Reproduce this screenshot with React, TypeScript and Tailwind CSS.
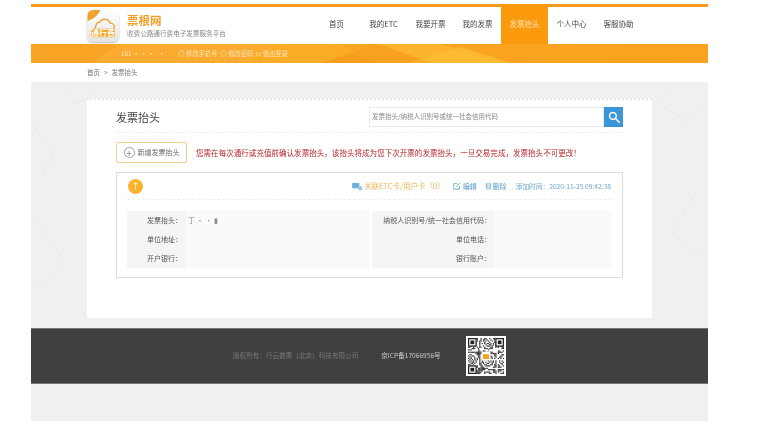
const navItems = ['首页', '我的ETC', '我要开票', '我的发票', '发票抬头', '个人中心', '客服协助']

const qrCells = Array.from({ length: 29 * 29 }, (_, i) => {
  const x = i % 29
  const y = Math.floor(i / 29)
  return { x, y, on: ((x * 7 + y * 13 + x * y * 3 + ((x ^ y) * 5)) % 7) < 3 }
})

function Logo() {
  return (
    <div className="relative w-[32px] h-[32px] rounded-[6px] bg-gradient-to-b from-white to-[#e4e4e4] shadow-[0_1px_2px_#bbb] overflow-hidden shrink-0">
      <svg viewBox="0 0 33 34" className="absolute inset-0 w-full h-full">
        <path d="M0 12 L0 5 Q0 0 5 0 L14 0 Q10 8 0 12Z" fill="#f0a32c" />
        <path d="M9 17 a4 4 0 0 1 4 -4 a6 6 0 0 1 11 1 a4 4 0 0 1 1 8 L11 22 a3 3 0 0 1 -2 -5Z" fill="none" stroke="#eaa33a" strokeWidth="1.4" />
        <rect x="4" y="20" width="25" height="9" rx="2" fill="#f4a41f" />
      </svg>
      <span className="absolute left-0 right-0 top-[18px] text-center text-[8px] leading-[10px] font-bold text-white">通行费</span>
    </div>
  )
}

function BandPattern() {
  return (
    <svg viewBox="0 0 677 19" preserveAspectRatio="none" className="absolute inset-0 w-full h-full">
      <polygon points="90,0 250,0 215,19 60,19" fill="#fbae36" opacity="0.7" />
      <polygon points="250,0 345,0 300,19 205,19" fill="#fdb92f" opacity="0.45" />
      <polygon points="345,0 410,0 470,19 400,19" fill="#ffc23a" opacity="0.5" />
      <polygon points="375,19 430,3 480,19" fill="#fdbb35" opacity="0.8" />
      <polygon points="290,19 320,8 345,19" fill="#f79a1c" opacity="0.6" />
      <polygon points="310,0 350,0 400,19 340,19" fill="#f79a1c" opacity="0.35" />
    </svg>
  )
}

function GrayPattern() {
  return (
    <svg viewBox="0 0 677 339" className="absolute inset-0 w-full h-full">
      <g fill="none" stroke="#e9e9e9" strokeWidth="1">
        <path d="M30 0 L45 22 L62 12" />
        <path d="M0 40 L22 72 L12 92" />
        <path d="M0 130 L34 180 L0 210" />
        <path d="M645 0 L630 22 L655 40 L677 14" />
        <path d="M665 110 L640 150 L677 180" />
      </g>
    </svg>
  )
}

function SearchIcon() {
  return (
    <svg viewBox="0 0 16 16" className="w-[12px] h-[12px]" fill="none" stroke="white" strokeWidth="2">
      <circle cx="6.5" cy="6.5" r="4.5" />
      <path d="M10 10 L15 15" strokeLinecap="round" />
    </svg>
  )
}

function InfoRow({ label1, value1, label2 }: { label1: string; value1?: string; label2: string }) {
  return (
    <div className="flex h-[19px] items-center text-[7px] text-[#555] whitespace-nowrap">
      <div className="w-[59px] h-full bg-[#f5f5f5] flex items-center justify-end pr-[4px]">{label1}</div>
      <div className="w-[184px] h-full bg-[#fafafa] flex items-center pl-[2px] text-[#888]">{value1}</div>
      <div className="w-[2px]" />
      <div className="w-[122px] h-full bg-[#f5f5f5] flex items-center justify-end pr-[3px]">{label2}</div>
      <div className="flex-1 h-full bg-[#fafafa]" />
    </div>
  )
}

export default function App() {
  return (
    <div className="w-[761px] h-[421px] bg-white overflow-hidden font-['Noto_Sans_CJK_SC','Liberation_Sans',sans-serif] blur-[0.4px]">
      <div className="ml-[31px] w-[677px] pt-[4px]">
        <div className="h-[3px] bg-[#f39a1d]" />

        <header className="h-[37px] bg-white flex items-center pl-[56px]">
          <Logo />
          <div className="ml-[8px]">
            <div className="text-[11.5px] leading-[13px] font-bold text-[#f0a02a]">票根网</div>
            <div className="text-[6.6px] leading-[10px] text-[#888] mt-[1px]">收费公路通行费电子发票服务平台</div>
          </div>
          <nav className="flex ml-auto mr-[66px] -mt-[3px] h-[40px] self-start">
            {navItems.map((item) => (
              <div
                key={item}
                className={
                  item === '发票抬头'
                    ? 'w-[47px] flex items-center justify-center text-[7.5px] bg-[#fb9a0c] text-[#ffe3b0]'
                    : 'w-[47px] flex items-center justify-center text-[7.5px] text-[#444]'
                }
              >
                {item}
              </div>
            ))}
          </nav>
        </header>

        <div className="relative h-[19px] bg-gradient-to-r from-[#f9a425] to-[#fba31e] flex items-center overflow-hidden">
          <BandPattern />
          <div className="relative flex items-center gap-[3px] pl-[90px] text-[6.3px] text-[#fde3b6]">
            <span className="mr-[10px]">181 <span className="text-white">• • •&nbsp;&nbsp;&nbsp;•</span></span>
            <span>◎ 修改手机号</span>
            <span>◎ 修改密码</span>
            <span>⊡ 退出登录</span>
          </div>
        </div>

        <div className="h-[19px] flex items-center pl-[56px] text-[6.5px] text-[#777]">
          <span>首页</span>
          <span className="mx-[4px]">&gt;</span>
          <span>发票抬头</span>
        </div>

        <main className="relative h-[339px] bg-[#f0f0f0] pt-[16px] overflow-hidden">
          <GrayPattern />
          <div className="relative ml-[56px] w-[565px] h-[220px] bg-white border-t-2 border-dotted border-[#e9e9e9] px-[29px] pt-[8px]">
            <div className="flex items-center justify-between h-[25px] pb-[5px] border-b border-dashed border-[#eee]">
              <h1 className="text-[11px] text-[#444]">发票抬头</h1>
              <div className="flex h-[20px] -mt-[1px]">
                <div className="w-[235px] border border-[#eaeaea] flex items-center pl-[2px] text-[6.5px] text-[#888]">发票抬头/纳税人识别号或统一社会信用代码</div>
                <div className="w-[19px] bg-[#3a96d8] flex items-center justify-center"><SearchIcon /></div>
              </div>
            </div>

            <div className="flex items-center mt-[9px]">
              <div className="w-[71px] h-[21px] border border-[#f0d290] rounded-[2px] flex items-center justify-center gap-[3px] text-[7px] text-[#666]">
                <span className="w-[11px] h-[11px] rounded-full border border-[#999] flex items-center justify-center text-[10px] leading-none text-[#888]">+</span>
                新增发票抬头
              </div>
              <p className="ml-[9px] text-[7.55px] text-[#b3262c] whitespace-nowrap">您需在每次通行或充值前确认发票抬头，该抬头将成为您下次开票的发票抬头，一旦交易完成，发票抬头不可更改！</p>
            </div>

            <section className="mt-[9px] h-[106px] border border-[#ddd] px-[10px]">
              <div className="flex items-center justify-between h-[27px] pl-[1px] pr-[1px] border-b border-dashed border-[#eee]">
                <span className="w-[15px] h-[15px] rounded-full bg-[#fbb22c] flex items-center justify-center text-[8px] text-white">↑</span>
                <div className="flex items-center text-[7px] whitespace-nowrap">
                  <svg viewBox="0 0 12 10" className="w-[11px] h-[9px] mr-[1px]">
                    <rect x="0" y="1" width="8" height="6" rx="1" fill="#6fb0dc" />
                    <circle cx="9" cy="7" r="2.5" fill="#9cc9e8" />
                  </svg>
                  <span className="text-[7.5px] text-[#eeb35a]">关联ETC卡/用户卡（0）</span>
                  <svg viewBox="0 0 10 10" className="w-[8px] h-[8px] ml-[8px] mr-[2px]" fill="none" stroke="#5b9cc9" strokeWidth="1">
                    <path d="M8 5 V9 H1 V2 H5" />
                    <path d="M4 6 L9 1" />
                  </svg>
                  <span className="text-[#5a9bc8]">编辑</span>
                  <svg viewBox="0 0 10 10" className="w-[7px] h-[8px] ml-[8px] mr-[1px]" fill="none" stroke="#5b9cc9" strokeWidth="1">
                    <path d="M1 2 H9 M2 2 V9 H8 V2 M4 4 V7 M6 4 V7" />
                  </svg>
                  <span className="text-[#5a9bc8]">删除</span>
                  <span className="ml-[9px] text-[6.7px] text-[#6ea6cc]">添加时间：2020-11-25 09:42:38</span>
                </div>
              </div>
              <div className="mt-[11px]">
                <InfoRow label1="发票抬头：" value1="丁 • • ▮" label2="纳税人识别号/统一社会信用代码：" />
                <InfoRow label1="单位地址：" label2="单位电话：" />
                <InfoRow label1="开户银行：" label2="银行账户：" />
              </div>
            </section>
          </div>

          <footer className="relative mt-[10px] h-[56px] bg-[#404040] border-y border-[#777] flex items-center pl-[202px]">
            <span className="text-[6.6px] text-[#777]">版权所有：行云数票（北京）科技有限公司</span>
            <span className="ml-[23px] text-[6.6px] text-[#ccc]">京ICP备17066956号</span>
            <div className="ml-[25px] w-[40px] h-[40px] bg-white p-[2px] shrink-0">
              <svg viewBox="0 0 29 29" className="w-full h-full">
                {qrCells.map((c) => c.on && <rect key={`${c.x}-${c.y}`} x={c.x} y={c.y} width="1" height="1" fill="#333" />)}
                {[[0, 0], [22, 0], [0, 22]].map(([x, y]) => (
                  <g key={`${x}-${y}`}>
                    <rect x={x} y={y} width="7" height="7" fill="#222" />
                    <rect x={x + 1} y={y + 1} width="5" height="5" fill="white" />
                    <rect x={x + 2} y={y + 2} width="3" height="3" fill="#222" />
                  </g>
                ))}
                <rect x="11" y="11" width="7" height="7" fill="white" />
                <rect x="12" y="13" width="5" height="4" fill="#f0a32c" />
              </svg>
            </div>
          </footer>
        </main>
      </div>
    </div>
  )
}
